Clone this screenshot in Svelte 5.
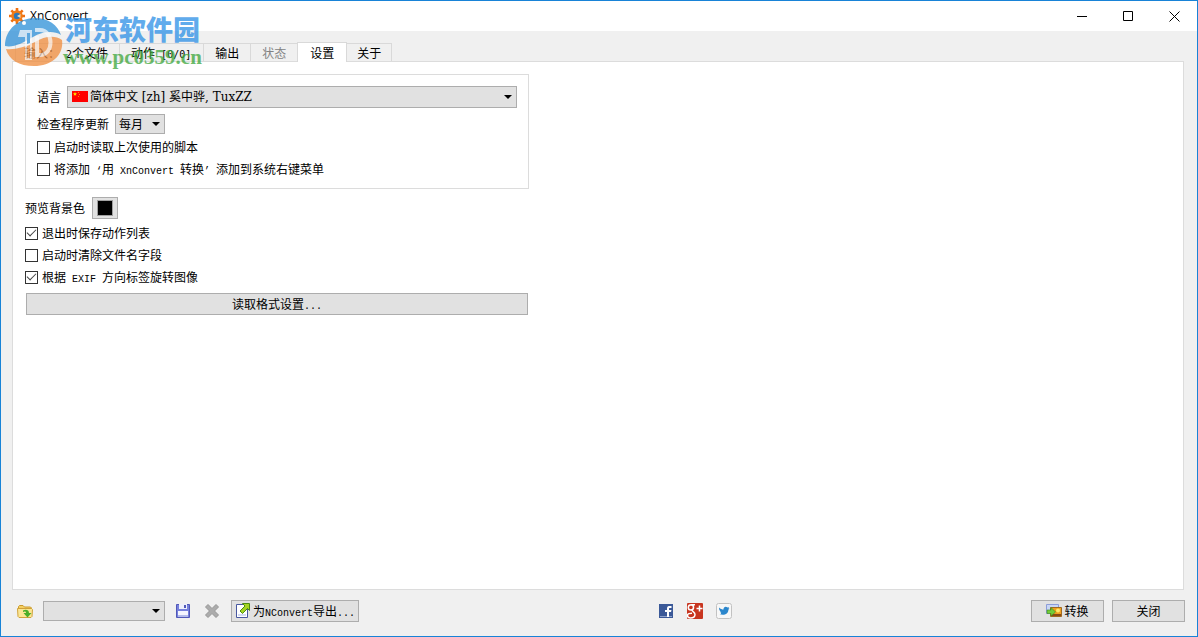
<script lang="ts">
    type Tab = { label: string; latin?: string; rest?: string; disabled?: boolean };

    const tabs: Tab[] = [
        { label: "输入：", latin: "2", rest: "个文件" },
        { label: "动作", latin: "[0/0]" },
        { label: "输出" },
        { label: "状态", disabled: true },
        { label: "设置" },
        { label: "关于" },
    ];

    let activeTab = $state(4);
    let loadLastScript = $state(false);
    let addToContextMenu = $state(false);
    let saveActions = $state(true);
    let clearFilename = $state(false);
    let rotateByExif = $state(true);
</script>

<div class="window">
    <header class="titlebar">
        <svg class="app-icon" viewBox="0 0 16 16" aria-hidden="true">
            <path
                d="M8 0v16M0 8h16M2.3 2.3l11.4 11.4M13.7 2.3L2.3 13.7"
                stroke="#f07010"
                stroke-width="2.6"
            />
            <circle cx="8" cy="8" r="5.8" fill="#f07c18" />
            <circle cx="8" cy="8" r="3.2" fill="#2f78b8" />
            <path d="M8 8l3.5-2v4z" fill="#f6dcb8" />
        </svg>
        <h1>XnConvert</h1>
        <div class="window-buttons">
            <button type="button" aria-label="最小化">
                <svg viewBox="0 0 11 11"><path d="M0 5.5h10" /></svg>
            </button>
            <button type="button" aria-label="最大化">
                <svg viewBox="0 0 11 11"><path d="M.5.5h9v9h-9z" /></svg>
            </button>
            <button type="button" aria-label="关闭窗口">
                <svg viewBox="0 0 11 11"><path d="M.5.5l10 10M10.5.5l-10 10" /></svg>
            </button>
        </div>
    </header>

    <div class="tabs" role="tablist">
        {#each tabs as tab, index}
            <button
                type="button"
                role="tab"
                class:active={index === activeTab}
                aria-selected={index === activeTab}
                disabled={tab.disabled}
                onclick={() => (activeTab = index)}
            >
                {tab.label}{#if tab.latin}<span class="latin">&nbsp;{tab.latin}</span>{/if}{tab.rest}
            </button>
        {/each}
    </div>

    <main>
        <section class="group">
            <div class="field">
                <label for="language">语言</label>
                <div class="select language">
                    <svg class="flag" viewBox="0 0 16 11" aria-hidden="true">
                        <path d="M0 0h16v11H0z" fill="#f00" />
                        <path d="M3 1l.6 1.3 1.4.1-1.1 1 .4 1.4L3 4l-1.3.8.4-1.4-1.1-1 1.4-.1z" fill="#fd0" />
                        <path d="M6 1h1v1H6zM7 3h1v1H7zM6 5h1v1H6z" fill="#f80" />
                    </svg>
                    <select id="language">
                        <option>简体中文 [zh] 奚中骅, TuxZZ</option>
                    </select>
                </div>
            </div>
            <div class="field update">
                <label for="update">检查程序更新</label>
                <div class="select">
                    <select id="update">
                        <option>每月</option>
                    </select>
                </div>
            </div>
            <label class="check">
                <input type="checkbox" bind:checked={loadLastScript} />
                <span>启动时读取上次使用的脚本</span>
            </label>
            <label class="check">
                <input type="checkbox" bind:checked={addToContextMenu} />
                <span>将添加<span class="latin">&nbsp;‘</span>用<span class="latin">&nbsp;XnConvert&nbsp;</span>转换<span class="latin">’&nbsp;</span>添加到系统右键菜单</span>
            </label>
        </section>

        <div class="field preview">
            <span id="preview-label">预览背景色</span>
            <button class="button swatch" type="button" aria-labelledby="preview-label">
                <span></span>
            </button>
        </div>
        <label class="check">
            <input type="checkbox" bind:checked={saveActions} />
            <span>退出时保存动作列表</span>
        </label>
        <label class="check">
            <input type="checkbox" bind:checked={clearFilename} />
            <span>启动时清除文件名字段</span>
        </label>
        <label class="check">
            <input type="checkbox" bind:checked={rotateByExif} />
            <span>根据<span class="latin">&nbsp;EXIF&nbsp;</span>方向标签旋转图像</span>
        </label>
        <button class="button formats" type="button"><span>读取格式设置<span class="latin">...</span></span></button>
    </main>

    <footer>
        <div class="scripts">
            <button class="icon" type="button" aria-label="打开脚本">
                <svg viewBox="0 0 16 16">
                    <path d="M1.5 12V3.5l1-1H6l1.5 1.5h6l1 1V12z" fill="#f5cf62" stroke="#c99a2e" />
                    <path d="M.5 5.5h14l1 1-.5 7-1 1h-12l-1-1z" fill="#fbe694" stroke="#d0a23a" />
                    <path d="M6 7.5c3-1.5 6-.5 6 2.500h2.500L10.500 14.500 6.500 10H9C9 8.500 8 8 6 9z" fill="#4aae28" />
                </svg>
            </button>
            <div class="select saved">
                <select aria-label="脚本">
                    <option></option>
                </select>
            </div>
            <button class="icon" type="button" aria-label="保存脚本">
                <svg viewBox="0 0 16 16">
                    <path d="M1.500 1.500h13v13h-13z" fill="#7680dc" stroke="#5058b8" />
                    <path d="M4 1h8v5H4z" fill="#eef0fc" />
                    <path d="M9 2h2v3H9z" fill="#5058b8" />
                    <path d="M3 8h10v6H3z" fill="#f4f5ff" />
                    <path d="M3 12h10v2H3z" fill="#b4bcec" />
                </svg>
            </button>
            <button class="icon" type="button" aria-label="删除脚本" disabled>
                <svg viewBox="0 0 16 16">
                    <path
                        d="M4 1.500l4 4 4-4L14.500 4l-4 4 4 4-2.500 2.500-4-4-4 4L1.500 12l4-4-4-4z"
                        fill="#acacac"
                        stroke="#969696"
                    />
                </svg>
            </button>
            <button class="button export" type="button">
                <svg viewBox="0 0 16 16" aria-hidden="true">
                    <path d="M1.500 1.500h11v13h-11z" fill="#fff" stroke="#4858a0" />
                    <path d="M3 11h8v2H3z" fill="#d4daf4" />
                    <path d="M7.500.500h7v7l-2-2-5 5L5 8l5-5z" fill="#a4d422" stroke="#4c8c10" />
                </svg>
                <span>为<span class="latin">NConvert</span>导出<span class="latin">...</span></span>
            </button>
        </div>

        <nav class="social">
            <a href="#facebook" aria-label="Facebook">
                <svg viewBox="0 0 16 16">
                    <path d="M1 1h14v14H1z" fill="#3b5998" />
                    <path d="M2 13h12v1H2z" fill="#8ea2cc" />
                    <path d="M9 14V9H7V7h2V5.500C9 3.500 10 3 12 3h1.500v2H12c-1 0-1 .3-1 1v1h2.500L13 9h-2v5z" fill="#fff" />
                </svg>
            </a>
            <a href="#google-plus" aria-label="Google+">
                <svg viewBox="0 0 16 16">
                    <rect width="16" height="16" rx="1" fill="#c8351f" />
                    <path
                        d="M8 1.800H4.500C2 1.800 1.300 3.300 1.300 4.500c0 1.500 1 2.500 2.500 2.500S6.500 6 6.500 4.500 5.500 2 4.500 2M5 7c0 1.500 3 2 3 4.500S6 15 3.500 15 .5 14 .5 12.500 2 10.300 5 10.300"
                        fill="none"
                        stroke="#fff"
                        stroke-width="1.5"
                    />
                    <path d="M9.500 5.500h6M12.500 2.500v6" stroke="#fff" stroke-width="1.500" />
                </svg>
            </a>
            <a href="#twitter" aria-label="Twitter">
                <svg viewBox="0 0 16 16">
                    <rect x=".5" y=".5" width="15" height="15" rx="2" fill="#f7f7f7" stroke="#c2c2c2" />
                    <path
                        d="M3 4.500c1.500 1.500 3 2 4.500 2C7.500 3.500 10 3 11.500 4.500L13 4l-.6 1.300 1 .2-1 1.200c0 4-4.400 6.300-8.900 4.300 1 0 2-.2 2.500-.8-1-.2-1.600-.8-2-1.700h1C3.500 7.800 3 6.700 3 4.500z"
                        fill="#2a86cc"
                    />
                </svg>
            </a>
        </nav>

        <div class="actions">
            <button class="button" type="button">
                <svg viewBox="0 0 16 16" aria-hidden="true">
                    <path d="M.5 1.500h12v9H.5z" fill="#c8d6f4" stroke="#8c9cd8" />
                    <path d="M4.500 4.500h11v9h-11z" fill="#f0a020" stroke="#a06a20" />
                    <path d="M5 11h10v2H5z" fill="#8c4a14" />
                    <circle cx="12" cy="7.500" r="2" fill="#ffe868" />
                    <path d="M1 7h4V4.500L9.500 9 5 13v-2.500H1z" fill="#72cc38" stroke="#3c8c18" stroke-width=".6" />
                </svg>
                转换
            </button>
            <button class="button" type="button">关闭</button>
        </div>
    </footer>

    <div class="watermark">
        <svg viewBox="0 0 58 50" aria-hidden="true">
            <path d="M0 29C0 12 14 1 30 1c13 0 23 7 26 17-8-5-19-3-28 2C18 26 8 31 0 29z" fill="#2c8fd8" />
            <path d="M1 32c9 1 19-2 29-7 10-6 20-7 27-2 2 14-9 26-28 26C14 49 4 43 1 32z" fill="#f08c3c" />
            <g opacity=".7">
                <path d="M15 13h12v30h-7V20h-7z" fill="#fff" />
                <path d="M30 13h5c14 0 14 25 0 25h-3V19" fill="none" stroke="#fff" stroke-width="4" />
            </g>
            <path d="M22 16h3v10l-3 1z" fill="#2c8fd8" />
            <path d="M22 29l3-1v13h-3z" fill="#f08c3c" />
            <circle cx="19" cy="6" r="2" fill="#fff" />
        </svg>
        <div>
            <strong>河东软件园</strong>
            <em>www.pc0359.cn</em>
        </div>
    </div>
</div>

<style>
    :global(body) {
        margin: 0;
    }

    .window {
        position: relative;
        box-sizing: border-box;
        min-height: 100vh;
        display: flex;
        flex-direction: column;
        border: 1px solid #1883d7;
        background: #f0f0f0;
        color: #000;
        font: 12px/16px "Noto Sans CJK SC", sans-serif;
    }

    button,
    select {
        font: inherit;
        color: inherit;
    }

    svg {
        display: block;
        flex: none;
    }

    .latin {
        font-family: "Liberation Mono", monospace;
        font-size: 10px;
        line-height: 0;
    }

    .titlebar {
        display: flex;
        align-items: center;
        height: 30px;
        padding-left: 8px;
        background: #fff;
    }

    .app-icon {
        width: 16px;
        height: 16px;
    }

    h1 {
        margin: 0 auto 0 5px;
        font: 12px/16px "Open Sans", sans-serif;
    }

    .window-buttons {
        display: flex;
    }

    .window-buttons button {
        display: grid;
        place-items: center;
        width: 46px;
        height: 28px;
        padding: 0;
        border: 0;
        background: none;
    }

    .window-buttons svg {
        width: 11px;
        height: 11px;
        fill: none;
        stroke: #000;
    }

    .tabs {
        display: flex;
        align-items: flex-end;
        height: 30px;
        padding-left: 14px;
    }

    .tabs button {
        height: 18px;
        margin-right: -1px;
        padding: 0 11px;
        border: 1px solid #d9d9d9;
        border-bottom: 0;
        background: #f0f0f0;
        line-height: 17px;
        white-space: nowrap;
    }

    .tabs button:first-child {
        padding: 0 11px 0 8px;
    }

    .tabs button:nth-child(2) {
        padding-right: 12px;
    }

    .tabs button:last-child {
        padding: 0 10px;
    }

    .tabs button:disabled {
        color: #838383;
    }

    .tabs button.active {
        position: relative;
        height: 20px;
        margin-bottom: -1px;
        padding: 0 12px;
        background: #fff;
    }

    .tabs .latin {
        font-family: "DejaVu Sans Mono", monospace;
    }

    main {
        flex: 1;
        display: flex;
        flex-direction: column;
        align-items: flex-start;
        margin: 0 13px 0 11px;
        padding: 12px;
        border: 1px solid #dcdcdc;
        background: #fff;
    }

    .group {
        box-sizing: border-box;
        width: 44%;
        max-width: 504px;
        min-width: 360px;
        padding: 11px 11px 8px;
        border: 1px solid #dcdcdc;
    }

    .field {
        display: flex;
        align-items: center;
        gap: 6px;
    }

    .update {
        margin: 6px 0 2px;
    }

    .select {
        position: relative;
        display: flex;
    }

    .select::after {
        content: "";
        position: absolute;
        top: 50%;
        right: 5px;
        margin-top: -2px;
        border: 4px solid transparent;
        border-top-color: #000;
        border-bottom: 0;
        pointer-events: none;
    }

    select {
        appearance: none;
        box-sizing: border-box;
        width: 100%;
        height: 20px;
        padding: 0 20px 0 3px;
        border: 1px solid #adadad;
        border-radius: 0;
        background: #e1e1e1;
    }

    .language {
        flex: 1;
    }

    .language select {
        height: 22px;
        padding-left: 22px;
        font-family: "DejaVu Serif", "Noto Sans CJK SC", serif;
    }

    .flag {
        position: absolute;
        top: 5px;
        left: 5px;
        width: 16px;
        height: 11px;
    }

    .check {
        display: flex;
        align-items: center;
        gap: 4px;
        height: 22px;
    }

    input {
        appearance: none;
        box-sizing: border-box;
        width: 13px;
        height: 13px;
        margin: 0;
        border: 1px solid #333;
        background: #fff;
    }

    input:checked::after {
        content: "";
        display: block;
        width: 8px;
        height: 4px;
        margin: 1px 0 0 1px;
        border: solid #444;
        border-width: 0 0 1px 1px;
        transform: rotate(-45deg);
    }

    .button {
        display: flex;
        align-items: center;
        justify-content: center;
        gap: 2px;
        box-sizing: border-box;
        height: 22px;
        padding: 0 3px;
        border: 1px solid #adadad;
        background: #e1e1e1;
        white-space: nowrap;
    }

    .button svg,
    .icon svg,
    .social svg {
        width: 16px;
        height: 16px;
    }

    .preview {
        gap: 7px;
        margin: 8px 0 3px;
    }

    .swatch {
        width: 26px;
    }

    .swatch span {
        width: 14px;
        height: 14px;
        border: 1px solid #a0a0a0;
        background: #000;
    }

    .formats {
        width: 44%;
        max-width: 502px;
        min-width: 358px;
        margin: 5px 1px 0;
    }

    footer {
        display: flex;
        align-items: center;
        justify-content: space-between;
        padding: 10px 12px 14px 16px;
    }

    .scripts,
    .social,
    .actions {
        display: flex;
        align-items: center;
    }

    .scripts {
        gap: 10px;
    }

    .icon {
        padding: 0;
        border: 0;
        background: none;
    }

    .icon:disabled {
        margin: 0 1px 0 3px;
    }

    .saved {
        width: 122px;
    }

    .social {
        gap: 13px;
    }

    .actions {
        gap: 8px;
    }

    .actions .button {
        width: 73px;
    }

    .watermark {
        position: absolute;
        top: 9px;
        left: 4px;
        display: flex;
        align-items: flex-end;
        opacity: 0.75;
        pointer-events: none;
    }

    .watermark svg {
        width: 58px;
        height: 50px;
    }

    .watermark strong,
    .watermark em {
        display: block;
        white-space: nowrap;
    }

    .watermark strong {
        padding-left: 2px;
        color: #2b8fe6;
        font-size: 27px;
        font-weight: 900;
        line-height: 37px;
    }

    .watermark em {
        color: #3da63a;
        font: bold 21px/20px "Liberation Serif", serif;
    }
</style>
